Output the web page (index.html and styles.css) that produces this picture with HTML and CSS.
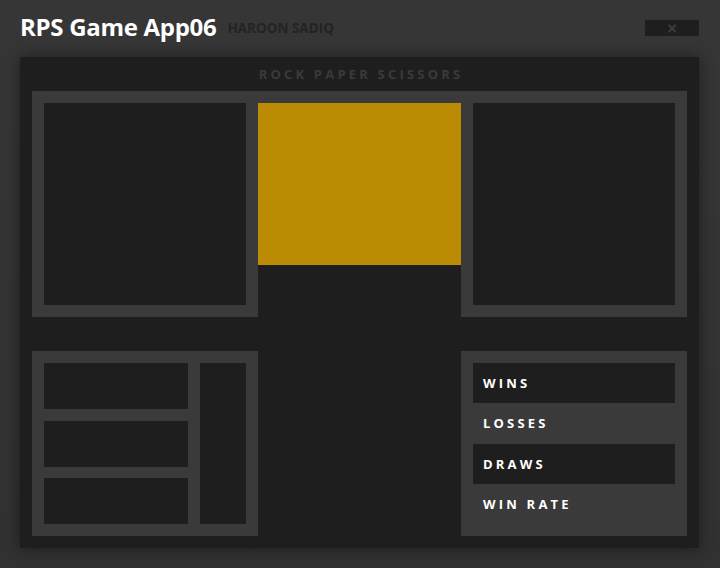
FILE: index.html
```html
<!DOCTYPE html>
<html>
<head>
<meta charset="utf-8">
<link rel="stylesheet" href="styles.css">
</head>
<body>
<header class="topbar">
  <h1 class="app-title">RPS Game App06</h1>
  <span class="author">HAROON SADIQ</span>
  <button class="close-btn">×</button>
</header>
<main class="panel">
  <div class="panel-title">ROCK PAPER SCISSORS</div>
  <section class="row-top">
    <div class="card"><div class="slot big"></div></div>
    <div class="middle"><div class="gold"></div></div>
    <div class="card"><div class="slot big"></div></div>
  </section>
  <section class="row-bottom">
    <div class="card choices">
      <div class="choice-list">
        <div class="slot"></div>
        <div class="slot"></div>
        <div class="slot"></div>
      </div>
      <div class="slot tall"></div>
    </div>
    <div class="spacer"></div>
    <div class="card stats">
      <div class="stat dark">WINS</div>
      <div class="stat">LOSSES</div>
      <div class="stat dark">DRAWS</div>
      <div class="stat">WIN RATE</div>
    </div>
  </section>
</main>
</body>
</html>
```
FILE: styles.css
```css
* { box-sizing: border-box; }
html, body { margin: 0; padding: 0; }
body {
  width: 720px;
  height: 568px;
  overflow: hidden;
  background: linear-gradient(#363636, #313131);
  font-family: "Open Sans", "Noto Sans", sans-serif;
}
.topbar {
  height: 57px;
  display: flex;
  align-items: flex-start;
  padding: 0 21px 0 20px;
}
.app-title {
  margin: 10px 0 0 0;
  font-size: 24px;
  font-weight: 700;
  color: #fff;
  letter-spacing: -0.3px;
  line-height: 34px;
}
.author {
  margin: 18px 0 0 11px;
  font-size: 13.5px;
  font-weight: 700;
  color: #232323;
  line-height: 20px;
}
.close-btn {
  margin: 20px 0 0 auto;
  width: 54px;
  height: 16px;
  border: 0;
  padding: 0;
  background: #1e1e1e;
  color: #3e3e3e;
  font-family: "DejaVu Sans", sans-serif;
  font-weight: 700;
  font-size: 14px;
  line-height: 16px;
}
.panel {
  margin: 0 21px 0 20px;
  height: 491px;
  background: #1e1e1e;
  padding: 0 12px 12px;
  box-shadow: 0 0 14px rgba(0,0,0,0.45);
}
.panel-title {
  height: 34px;
  text-align: center;
  color: #3a3a3a;
  font-weight: 700;
  font-size: 13px;
  letter-spacing: 3.2px;
  line-height: 34px;
  padding-left: 3px;
}
.row-top {
  display: grid;
  grid-template-columns: 226px 203px 226px;
  height: 226px;
}
.card {
  background: #3a3a3a;
  padding: 12px;
}
.slot { background: #1e1e1e; }
.slot.big { width: 202px; height: 202px; }
.middle {
  border-top: 12px solid #3a3a3a;
}
.gold {
  height: 162px;
  background: #bb8b04;
}
.row-bottom {
  margin-top: 34px;
  display: grid;
  grid-template-columns: 226px 203px 226px;
  height: 185px;
}
.choices {
  display: flex;
  gap: 12px;
}
.choice-list {
  width: 144px;
  display: flex;
  flex-direction: column;
  gap: 11.5px;
}
.choice-list .slot { flex: 1; }
.slot.tall { width: 46px; }
.stats {
  display: flex;
  flex-direction: column;
}
.stat {
  flex: 1;
  padding-left: 10px;
  display: flex;
  align-items: center;
  color: #fff;
  font-weight: 700;
  font-size: 13px;
  letter-spacing: 3.2px;
}
.stat.dark { background: #1e1e1e; }
```
